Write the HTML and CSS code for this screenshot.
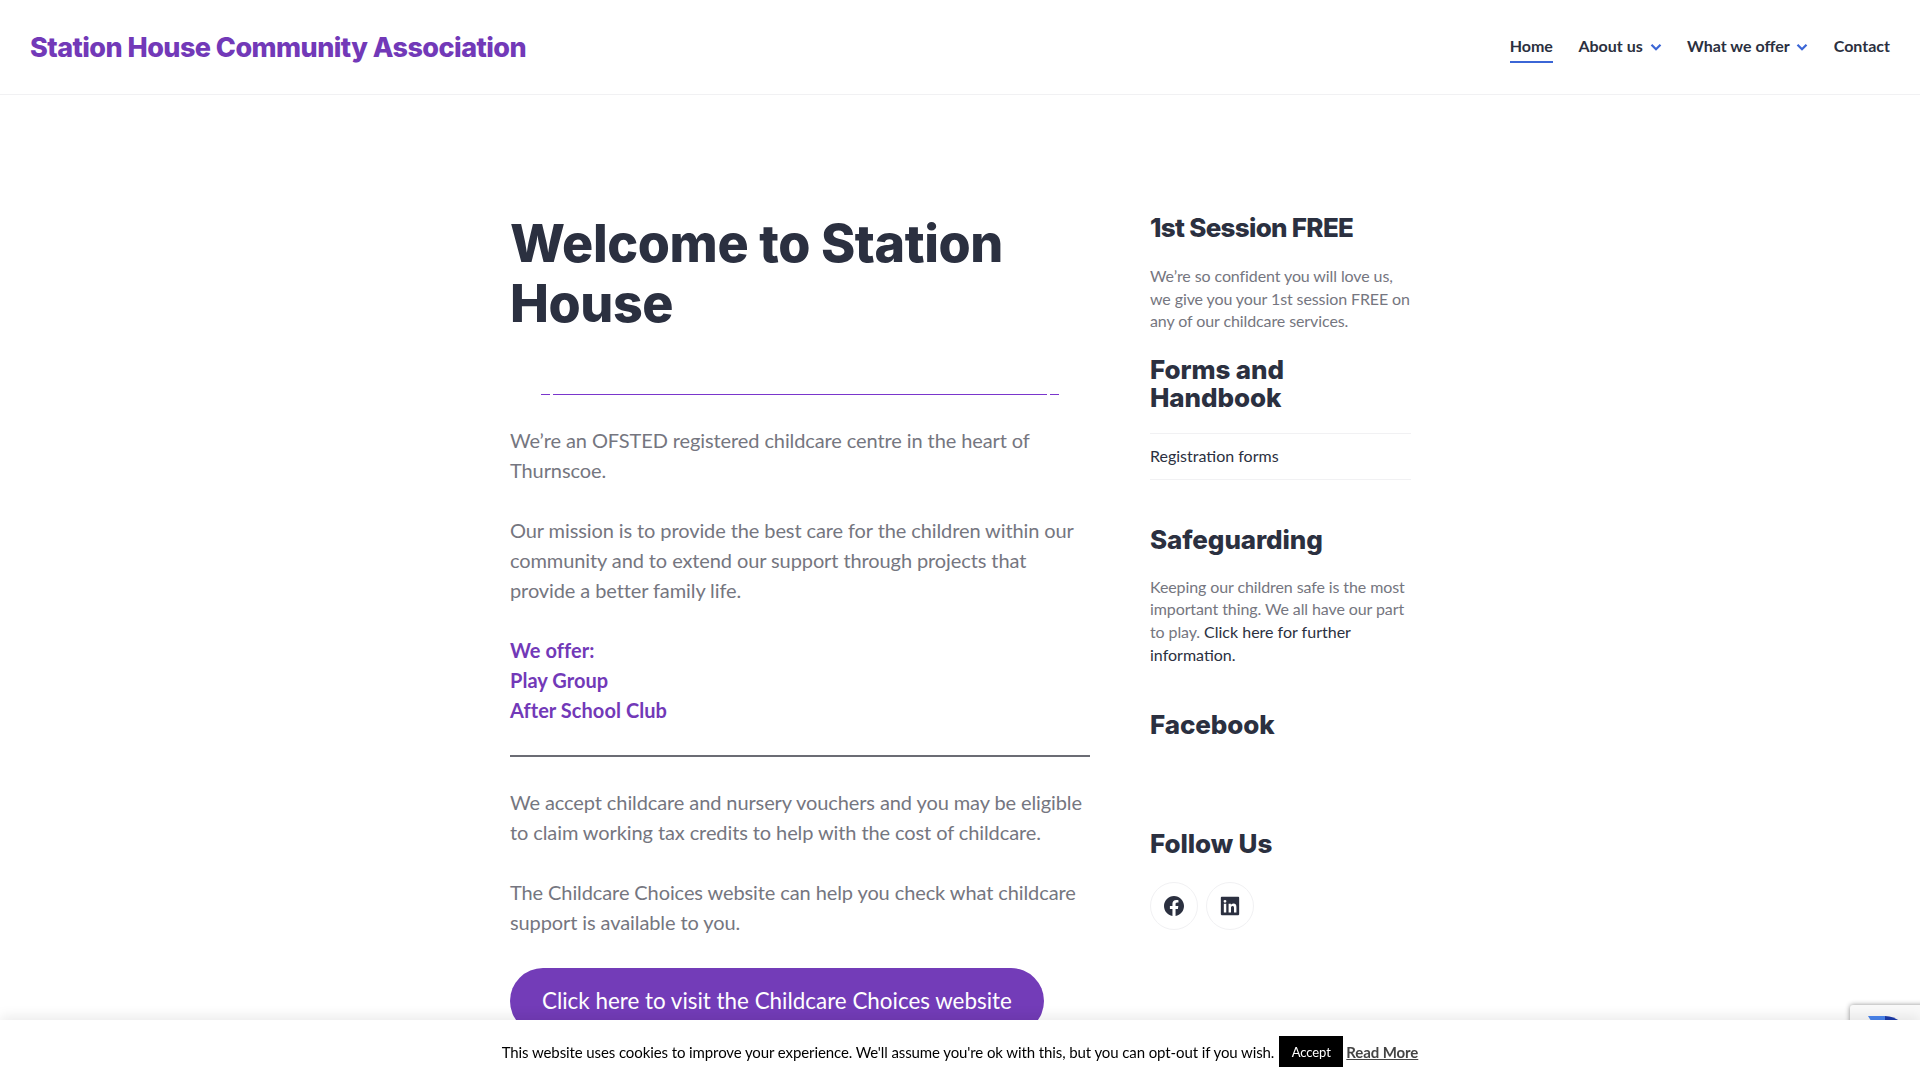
FILE: index.html
```html
<!DOCTYPE html>
<html lang="en">
<head>
<meta charset="utf-8">
<title>Station House Community Association</title>
<link rel="stylesheet" href="styles.css">
</head>
<body>
<header class="site-header">
  <a class="site-title" href="#">Station House Community Association</a>
  <nav class="nav">
    <a class="nav-item active" href="#">Home</a>
    <a class="nav-item" href="#">About us <svg class="chev" viewBox="0 0 10 8"><path d="M1 1.5 5 5.5 9 1.5" fill="none" stroke="#3b66d6" stroke-width="2"/></svg></a>
    <a class="nav-item" href="#">What we offer <svg class="chev" viewBox="0 0 10 8"><path d="M1 1.5 5 5.5 9 1.5" fill="none" stroke="#3b66d6" stroke-width="2"/></svg></a>
    <a class="nav-item" href="#">Contact</a>
  </nav>
</header>
<div class="layout">
  <main class="main">
    <h1 class="title">Welcome to Station House</h1>
    <div class="divider"><i class="dash"></i><i class="line"></i><i class="dash"></i></div>
    <p>We’re an OFSTED registered childcare centre in the heart of Thurnscoe.</p>
    <p>Our mission is to provide the best care for the children within our community and to extend our support through projects that provide a better family life.</p>
    <p class="offer">We offer:<br>Play Group<br>After School Club</p>
    <hr class="rule">
    <p>We accept childcare and nursery vouchers and you may be eligible to claim working tax credits to help with the cost of childcare.</p>
    <p>The Childcare Choices website can help you check what childcare support is available to you.</p>
    <a class="cta" href="#">Click here to visit the Childcare Choices website</a>
  </main>
  <aside class="side">
    <h2 class="w-title first">1st Session FREE</h2>
    <p class="w-text">We’re so confident you will love us, we give you your 1st session FREE on any of our childcare services.</p>
    <h2 class="w-title forms">Forms and Handbook</h2>
    <ul class="w-list"><li><a href="#">Registration forms</a></li></ul>
    <h2 class="w-title safe">Safeguarding</h2>
    <p class="w-text">Keeping our children safe is the most important thing. We all have our part to play. <a href="#">Click here for further information.</a></p>
    <h2 class="w-title fb">Facebook</h2>
    <h2 class="w-title follow">Follow Us</h2>
    <div class="social">
      <a class="soc" href="#"><svg viewBox="0 0 24 24" width="20" height="20"><path fill="#2b3040" d="M24 12.07C24 5.4 18.63 0 12 0S0 5.4 0 12.07c0 6.03 4.39 11.02 10.13 11.93v-8.44H7.08v-3.49h3.05V9.41c0-3.02 1.79-4.69 4.53-4.69 1.31 0 2.69.24 2.69.24v2.97h-1.52c-1.49 0-1.96.93-1.96 1.89v2.25h3.33l-.53 3.49h-2.8V24C19.61 23.09 24 18.1 24 12.07z"/></svg></a>
      <a class="soc" href="#"><svg viewBox="0 0 24 24" width="20" height="20"><path fill="#2b3040" d="M22 1H2a1 1 0 0 0-1 1v20a1 1 0 0 0 1 1h20a1 1 0 0 0 1-1V2a1 1 0 0 0-1-1zM7.5 19.7H4.6V9.4h2.9v10.3zM6 8.1a1.7 1.7 0 1 1 0-3.4 1.7 1.7 0 0 1 0 3.4zm13.7 11.6h-2.9v-5c0-1.2 0-2.7-1.7-2.7s-1.9 1.3-1.9 2.6v5.1h-2.9V9.4h2.8v1.4c.4-.8 1.4-1.7 2.9-1.7 3.1 0 3.7 2 3.7 4.7v5.9z"/></svg></a>
    </div>
  </aside>
</div>
<div class="recaptcha"><svg class="rc-logo" viewBox="0 0 40 8" width="40" height="8"><path fill="#4a85ee" d="M0 0H17V8H5z"/><path fill="#1c3aa9" d="M17 0C23 0 28 2 33 6V8H17z"/></svg></div>
<div class="cookie">
  <span>This website uses cookies to improve your experience. We'll assume you're ok with this, but you can opt-out if you wish.</span>
  <a class="accept" href="#">Accept</a>
  <a class="more" href="#">Read More</a>
</div>
</body>
</html>
```

FILE: styles.css
```css
* { box-sizing: border-box; }
html, body { margin: 0; height: 100%; overflow: hidden; background: #fff; }
body { font-family: Lato, "Liberation Sans", sans-serif; color: #757680; }
a { color: inherit; text-decoration: none; }

.site-header {
  height: 95px;
  border-bottom: 1px solid #f1f1f3;
  display: flex;
  align-items: center;
  justify-content: space-between;
  padding: 0 30px;
}
.site-title {
  font-family: Inter, sans-serif;
  font-weight: 800;
  font-size: 27px;
  letter-spacing: -0.55px;
  color: #7239b8;
}
.nav { display: flex; gap: 25.5px; align-items: center; }
.nav-item {
  display: block;
  font-size: 16px;
  font-weight: 700;
  color: #2b3040;
  line-height: 24px;
  padding: 3px 0;
  border-bottom: 2px solid transparent;
  white-space: nowrap;
}
.nav-item.active { border-bottom-color: #3b66d6; }
.chev { width: 12px; height: 9px; margin-left: 3px; }

.layout {
  display: flex;
  gap: 60px;
  padding: 119px 0 0 510px;
}
.main { width: 580px; flex: none; font-size: 20px; line-height: 30px; }
.main p { margin: 0 0 30px; letter-spacing: -0.1px; }
.title {
  font-family: Inter, sans-serif;
  font-weight: 800;
  font-size: 52px;
  line-height: 60px;
  letter-spacing: -0.4px;
  color: #2b3040;
  margin: 0;
}
.divider {
  display: flex;
  gap: 3px;
  padding: 0 31px;
  margin: 60px 0 30px;
}
.dash { width: 9px; height: 1px; background: #7a36cc; flex: none; }
.line { flex: 1; height: 1px; background: #7a36cc; }
.main p.offer { color: #7239b8; font-weight: 700; letter-spacing: 0.05px; }
.rule { border: 0; border-top: 2px solid #6b6c74; margin: 0 0 30px; }
.cta {
  display: inline-block;
  background: #733cb8;
  color: #fff;
  font-size: 22.4px;
  line-height: 34px;
  padding: 16px 32px;
  margin-top: 1px;
  border-radius: 34px;
}

.side { width: 261px; flex: none; font-size: 16px; line-height: 22.6px; }
.side a { color: #2b3040; letter-spacing: 0; }
.w-title {
  font-family: Inter, sans-serif;
  font-weight: 800;
  font-size: 26px;
  line-height: 28px;
  letter-spacing: -0.1px;
  color: #2b3040;
  margin: 0;
}
.w-text { margin: 0; letter-spacing: -0.1px; }
.first { margin: 0 0 23px; letter-spacing: -0.7px; }
.forms { margin-top: 23px; }
.w-list { list-style: none; margin: 21px 0 0; padding: 0; border-top: 1px solid #f1f1f3; border-bottom: 1px solid #f1f1f3; }
.w-list li { height: 45px; display: flex; align-items: center; }
.safe { margin: 46px 0 22px; }
.fb { margin-top: 45px; }
.follow { margin-top: 91px; }
.social { display: flex; gap: 8px; margin-top: 24px; }
.soc {
  width: 48px; height: 48px;
  border: 1px solid #f1f1f3;
  border-radius: 50%;
  display: flex; align-items: center; justify-content: center;
}

.cookie {
  position: fixed;
  left: 0; right: 0; bottom: 0;
  height: 60px;
  padding-top: 3px;
  background: #fff;
  box-shadow: 0 -4px 12px rgba(0,0,0,.08);
  display: flex;
  align-items: center;
  justify-content: center;
  font-size: 15px;
  letter-spacing: -0.1px;
  color: #000;
}
.accept {
  background: #000;
  color: #fff;
  font-size: 13px;
  height: 31px;
  width: 64px;
  display: flex; align-items: center; justify-content: center;
  margin: 0 3px 0 5px;
}
.more { color: #444; font-weight: 700; text-decoration: underline; }
.recaptcha {
  position: fixed;
  left: 1850px;
  top: 1005px;
  width: 256px;
  height: 60px;
  background: #f9f9f9;
  border-radius: 3px;
  box-shadow: 0 0 5px rgba(0,0,0,.45);
  padding: 11px 0 0 18px;
}
.rc-logo { display: block; }
```
